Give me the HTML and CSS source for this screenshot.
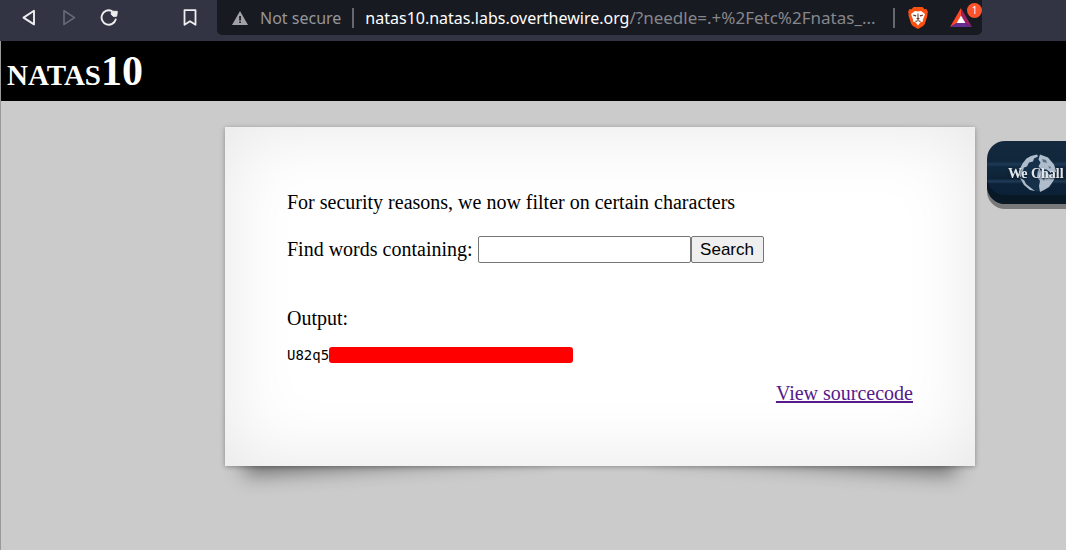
FILE: index.html
```html
<!DOCTYPE html>
<html lang="en">
<head>
<meta charset="utf-8">
<title>natas10</title>
<link rel="stylesheet" href="styles.css">
</head>
<body>
<nav class="toolbar" aria-label="Browser">
  <div class="nav-buttons">
    <button class="icon-button" type="button" aria-label="Back">
      <svg width="18" height="18" viewBox="0 0 18 18"><path d="M14 1.800v13.600L3.500 8.600z" fill="none" stroke="#eee" stroke-width="1.900" stroke-linejoin="round"/></svg>
    </button>
    <button class="icon-button" type="button" aria-label="Forward">
      <svg width="18" height="18" viewBox="0 0 18 18"><path d="M4 1.800v13.600L14.500 8.600z" fill="none" stroke="#666977" stroke-width="1.700" stroke-linejoin="round"/></svg>
    </button>
    <button class="icon-button" type="button" aria-label="Reload">
      <svg width="18" height="18" viewBox="0 0 18 18"><path d="M15.700 10.500A7.200 7.200 0 1 1 11.500 1.800" fill="none" stroke="#eee" stroke-width="1.900" stroke-linecap="round"/><path d="M11.500 2.200l5.800.2-.6 4.800-3.500.2-2-2.200z" fill="#eee" stroke="#eee" stroke-linejoin="round"/></svg>
    </button>
    <button class="icon-button bookmark" type="button" aria-label="Bookmark">
      <svg width="18" height="18" viewBox="0 0 18 18"><path d="M3.500 1.200h11v14.600L9 12.200l-5.500 3.600z" fill="none" stroke="#eee" stroke-width="1.800" stroke-linejoin="round"/></svg>
    </button>
  </div>
  <div class="address">
    <svg class="warning" width="16" height="14" viewBox="0 0 16 14"><path d="M8 0l8 14H0z" fill="#a0a2a7"/><path d="M7.200 5h1.700v4.400H7.200zM7.200 10.500h1.700v1.600H7.200z" fill="#181a21"/></svg>
    <span class="muted">Not secure</span>
    <span class="divider"></span>
    <span class="url"><span class="host">natas10.natas.labs.overthewire.org</span><span class="query">/?needle=.+%2Fetc%2Fnatas_...</span></span>
    <span class="divider"></span>
    <button class="icon-button shield" type="button" aria-label="Shields">
      <svg width="20" height="22" viewBox="0 0 20 22"><path d="M5.500 0h9l2 2.200 1.900-.1L20 5l-.7 2 .2 1.500-2.700 8.500-1.700 2L10 22l-5.100-3-1.700-2L.5 8.500.7 7 0 5l1.600-2.900 1.900.1z" fill="#fb5010"/><path d="M7 4l3 .6L13 4l4 3-1 2.900-1.200 3.100.2 1.500-2.500.8L10 18.500l-2.500-3.200-2.500-.8.200-1.500L4 9.900 3 7z" fill="#fff"/><path d="M4.700 7.500l3.700.8-.5 1.100-2.300-.5zM15.300 7.500l-3.700.8.5 1.100 2.300-.5zM9.500 6.500h1v4.200l1.300.9L10 12.900l-1.800-1.300 1.300-.9zM7 14l3-.8 3 .8-1 .9-2-.8-2 .8z" fill="#6b3527"/></svg>
    </button>
    <button class="icon-button rewards" type="button" aria-label="Rewards">
      <svg width="22" height="19" viewBox="0 0 22 19"><path d="M11 0L0 19l7-4 4-7z" fill="#ff4724"/><path d="M11 0l11 19-7-4-4-7z" fill="#9e1f63"/><path d="M0 19h22l-7-4H7z" fill="#662d91"/><path d="M11 7.500L6.600 15h8.800z" fill="#fff"/></svg>
      <span class="count">1</span>
    </button>
  </div>
</nav>
<div class="page">
  <h1 class="title">natas10</h1>
  <main class="content">
    <p class="line">For security reasons, we now filter on certain characters</p>
    <form class="search">
      <label for="needle">Find words containing:</label>
      <input class="needle" id="needle" name="needle" type="text">
      <button class="submit" type="button">Search</button>
    </form>
    <p class="line">Output:</p>
    <pre class="output">U82q5<span class="redacted"></span></pre>
    <div class="source"><a href="#source">View sourcecode</a></div>
  </main>
</div>
<aside class="challenge">
  <svg class="globe" width="40" height="40" viewBox="0 0 40 40"><circle cx="20" cy="20" r="18.500" fill="#17304a"/><path d="M13 3l6-1.500 1 2-4 2-1 3-4 1-2 4-3 1-2 6-1 4-2-2 .5-6 3-6 4-5zM2 25l4 2 2 4 5 4 4 3-5-1-6-5zM22 1.500l8 3 6 7 2.500 8-3-1-3 1-4-3-5 0-3-3 2-4-2-3zM20 17l7 1 5 4 5-1-1 6-5 7-5 3-4 2-1-6 1-5-3-4z" fill="#aebccb"/><path d="M24 6l4 1 1 3-4-1zM30 13l3 1-1 2zM24 24l3 1-1 3z" fill="#557089"/></svg>
  <span class="challenge-name">We Chall</span>
</aside>
</body>
</html>
```
FILE: styles.css
```css
* {
  box-sizing: border-box;
}

body {
  margin: 0;
  min-height: 100vh;
  display: flex;
  flex-direction: column;
  background: #cbcbcb;
  font: 20px/23px "Liberation Serif", "Times New Roman", serif;
  color: #000;
  overflow: hidden;
}

.toolbar {
  display: flex;
  height: 41px;
  padding-bottom: 6px;
  background: #323443;
  font: 16px/20px "Noto Sans", "Open Sans", sans-serif;
}

.nav-buttons {
  display: flex;
  align-items: center;
  gap: 22px;
  width: 217px;
  padding-left: 20px;
}

.icon-button {
  display: flex;
  flex: none;
  padding: 0;
  border: 0;
  background: none;
}

.bookmark {
  margin-left: 41px;
}

.address {
  display: flex;
  align-items: center;
  width: 765px;
  padding: 0 10px 0 15px;
  border-radius: 0 0 5px 5px;
  background: #181a21;
  color: #85878c;
  white-space: nowrap;
}

.warning {
  flex: none;
}

.muted {
  margin-left: 12px;
  color: #94969b;
}

.divider {
  flex: none;
  width: 2px;
  height: 20px;
  margin: 0 11px;
  background: #66686e;
}

.url {
  flex: 1;
}

.host {
  color: #fff;
}

.query {
  font-size: 17px;
}

.shield {
  margin-left: 2px;
}

.rewards {
  position: relative;
  margin-left: 22px;
}

.count {
  position: absolute;
  top: -5px;
  right: -10px;
  width: 15px;
  height: 15px;
  border-radius: 50%;
  background: #fb542b;
  color: #fff;
  font: 10px/15px "Noto Sans", sans-serif;
  text-align: center;
}

.page {
  position: relative;
  z-index: 0;
  flex: 1;
  border-left: 1px solid #999;
}

.title {
  height: 60px;
  margin: 0;
  padding: 0 6px;
  background: #000;
  color: #fff;
  font-size: 42px;
  line-height: 60px;
  font-variant: small-caps;
}

.content {
  position: relative;
  max-width: 750px;
  margin: 26px 0 0 224px;
  padding: 64px 62px 61px;
  background: #fff;
  box-shadow: 0 1px 5px rgba(0, 0, 0, 0.3), inset 0 0 75px rgba(0, 0, 0, 0.1);
}

.content::before,
.content::after {
  content: "";
  position: absolute;
  z-index: -1;
  bottom: 20px;
  width: 40%;
  height: 20%;
  box-shadow: 0 19px 20px rgba(0, 0, 0, 0.45);
}

.content::before {
  left: 16px;
  transform: rotate(-4deg);
}

.content::after {
  right: 16px;
  transform: rotate(4deg);
}

.line {
  margin: 0;
}

.search {
  display: flex;
  align-items: center;
  margin: 22px 0 44px;
}

.needle {
  width: 213px;
  height: 27px;
  margin-left: 5px;
  border: 1px solid #767676;
  border-radius: 2px;
  background: #fff;
  font: 17px "Liberation Sans", Arial, sans-serif;
}

.submit {
  width: 73px;
  height: 27px;
  padding: 0;
  border: 1px solid #767676;
  border-radius: 2px;
  background: #efefef;
  color: #000;
  font: 17px "Liberation Sans", Arial, sans-serif;
}

.output {
  display: flex;
  align-items: center;
  margin: 17px 0 19px;
  font: 14px/16px "DejaVu Sans Mono", monospace;
}

.redacted {
  width: 244px;
  height: 16px;
  border-radius: 3px;
  background: #f00;
}

.source {
  text-align: right;
}

.source a {
  color: #551a8b;
}

.challenge {
  position: fixed;
  z-index: 1;
  top: 141px;
  right: 0;
  width: 79px;
  height: 63px;
  padding: 12px 0 0 31px;
  border-radius: 18px 0 0 18px;
  background: linear-gradient(#14293d, #10273c 32%, #1c3a56 37%, #102940 41%, #0e2236 60%, #203c58 64%, #0c2238 68%, #0a2036);
  box-shadow: inset 0 -9px 0 #091825, 0 5px 0 #797979;
}

.globe {
  display: block;
}

.challenge-name {
  position: absolute;
  top: 21px;
  left: 21px;
  color: #e1e6ea;
  font-size: 14px;
  font-weight: bold;
  text-shadow: 0 1px 2px #0b1b2b;
  white-space: nowrap;
}
```
